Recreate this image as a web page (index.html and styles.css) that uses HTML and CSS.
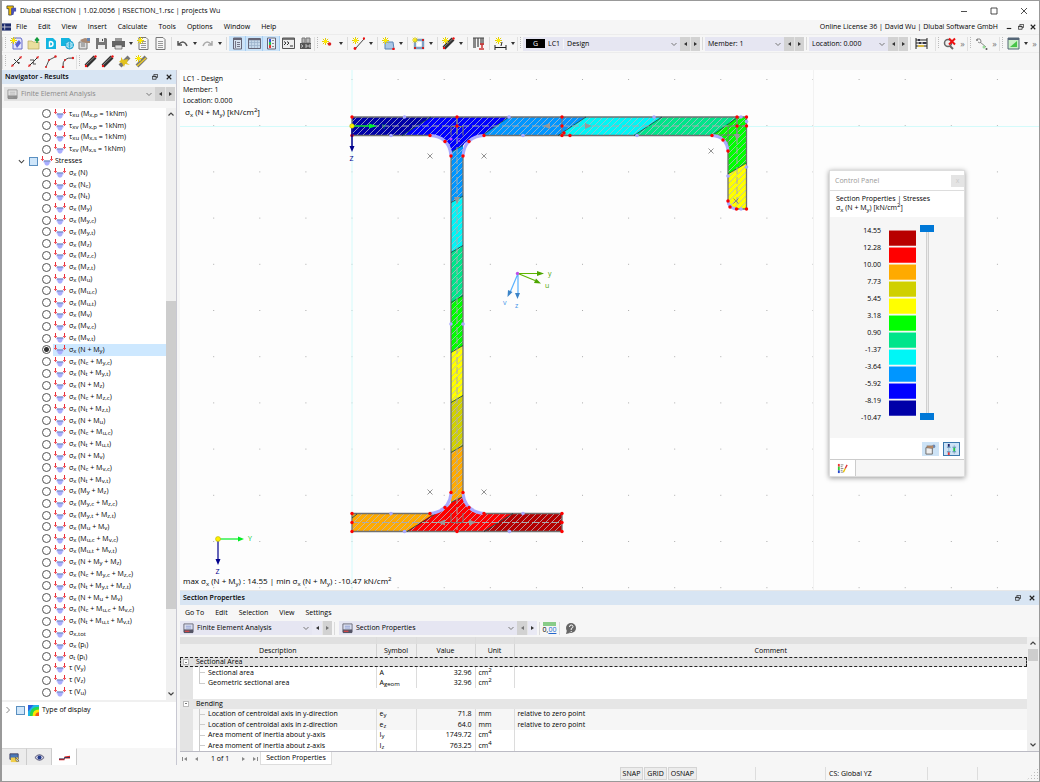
FILE: index.html
```html
<!DOCTYPE html>
<html lang="en">
<head>
<meta charset="utf-8">
<title>Dlubal RSECTION</title>
<link rel="stylesheet" href="styles.css">
</head>
<body>
<svg class="defs" aria-hidden="true">
<defs>
<symbol id="stress" viewBox="0 0 12 10"><path d="M2.500 4.500h7v2H8.500V8L7 9.500H5L3.500 8V6.500h-1z" fill="#a9adff"/><path d="M3 5h6" stroke="#6f8bb0"/><path d="M1.500 0v5M10.500 0v5" stroke="#e8303a"/><path d="M0 3h3v1H2v1H1V4H0zM9 3h3v1h-1v1h-1V4H9z" fill="#f0555c"/></symbol>
<symbol id="star" viewBox="0 0 8 8"><path d="M4 0v8M0 4h8M1 1l6 6M7 1L1 7" stroke="#e0c800" stroke-width="1.100"/><circle cx="4" cy="4" r="2" fill="#ffee00"/></symbol>
<symbol id="logo" viewBox="0 0 12 12"><path d="M1 1h7v3H6v7H3V4H1z" fill="#f3c000" stroke="#333" stroke-width=".8"/><path d="M6 3h5v4H9l-1 4H6z" fill="#4c53b5"/></symbol>
<symbol id="new" viewBox="0 0 13 13"><path d="M3 1h8l1 2v9H3z" fill="#e4e6fb" stroke="#666cc8"/><path d="M5 7l4-4 2 3-4 5z" fill="#5a62d6"/><use href="#star" width="7" height="7"/></symbol>
<symbol id="open" viewBox="0 0 13 13"><path d="M1 4h4l1 1h6v7H1z" fill="#eadf9e" stroke="#b7a85c" stroke-width=".7"/><path d="M10 6V2M8 3.500L10 1l2 2.500" stroke="#139b3c" stroke-width="1.400" fill="none"/></symbol>
<symbol id="cloud" viewBox="0 0 13 13"><path d="M2 1h7l3 3v8H2z" fill="#13b5e0"/><path d="M5.500 4.500v5q3.500 0 3.500-2.500T5.500 4.500" fill="none" stroke="#fff" stroke-width="1.400"/></symbol>
<symbol id="globe" viewBox="0 0 13 13"><path d="M0 1h8l2 2v6H0z" fill="#13b5e0"/><circle cx="8.500" cy="8" r="4" fill="#c8f1fb" stroke="#13a0d0"/><path d="M4.500 8h8M8.500 4v8M6 5.500q2.500 2 5 0M6 10.500q2.500-2 5 0" stroke="#13a0d0" stroke-width=".7" fill="none"/></symbol>
<symbol id="proj" viewBox="0 0 13 13"><path d="M1 5h8v7H1z" fill="#ddd" stroke="#777"/><path d="M3 7h4M3 9h4" stroke="#777"/><path d="M2 3l5-2 5 1v4L9 6 4 5z" fill="#a98a74"/><path d="M9 1h3v3H9z" fill="#6487b8"/></symbol>
<symbol id="save" viewBox="0 0 13 13"><path d="M1 1h10l1 1v10H1z" fill="#777"/><path d="M4 1h5v4H4zM3 8h7v4H3z" fill="#eee"/><path d="M7 2h1v2H7z" fill="#444"/></symbol>
<symbol id="print" viewBox="0 0 13 13"><path d="M3 1h7v3H3z" fill="#999"/><path d="M0 4h13v6H0z" fill="#666"/><path d="M3 8h7v4H3z" fill="#ddd" stroke="#555" stroke-width=".7"/></symbol>
<symbol id="doc" viewBox="0 0 13 13"><path d="M2 .5h7l2 2v10H2z" fill="#f7f7f7" stroke="#777"/><path d="M4 4.500h5M4 6.500h5M4 8.500h5M4 10.500h5" stroke="#999"/></symbol>
<symbol id="docnew" viewBox="0 0 13 13"><use href="#doc" width="13" height="13"/><use href="#star" width="7" height="7"/></symbol>
<symbol id="undo" viewBox="0 0 13 13"><path d="M2 4v4h4M2.500 7.500Q8 2 11 9" fill="none" stroke="#555" stroke-width="1.500"/></symbol>
<symbol id="redo" viewBox="0 0 13 13"><path d="M11 4v4H7M10.500 7.500Q5 2 2 9" fill="none" stroke="#aaa" stroke-width="1.500"/></symbol>
<symbol id="nav" viewBox="0 0 13 13"><path d="M2.500 1h8v11h-8z" fill="#d7e2ee" stroke="#667"/><path d="M2.500 1h8v2h-8z" fill="#667"/><path d="M6 5.500h3M6 7.500h3M6 9.500h3M4.500 4v7" stroke="#778"/></symbol>
<symbol id="grid" viewBox="0 0 13 13"><path d="M.5 1.500h12v10H.5z" fill="#c5d8ea" stroke="#667"/><path d="M1 2.500h11" stroke="#667" stroke-width="1.500"/><path d="M3.500 3v8M6.500 3v8M9.500 3v8M1 5.500h11M1 8.500h11" stroke="#9ab0c8" stroke-width=".7"/></symbol>
<symbol id="legend" viewBox="0 0 13 13"><path d="M2.500 1h8v11h-8z" fill="#e8eef5" stroke="#667"/><path d="M4 2h2v3H4z" fill="#3454e0"/><path d="M4 5h2v3H4z" fill="#24c84c"/><path d="M4 8h2v3H4z" fill="#e83535"/><path d="M7 3.500h2M7 6.500h2M7 9.500h2" stroke="#888"/></symbol>
<symbol id="console" viewBox="0 0 13 13"><path d="M.5 1h12v10.500H.5z" fill="#eee" stroke="#555"/><path d="M1 2h11" stroke="#555" stroke-width="1.500"/><path d="M2 4.500L4 6 2 8M5 4.500L7 6 5 8M8 9h3" fill="none" stroke="#333"/></symbol>
<symbol id="script" viewBox="0 0 13 13"><path d="M3 1h3v5H3zM7 1h4v5H7z" fill="#bbb" stroke="#777"/><path d="M1 6h11v6H1z" fill="#555"/><path d="M2 7.500l2 1.500-2 1.500M6 8h2v2H6M12 8h-2v2h2" fill="none" stroke="#ddd" stroke-width=".8"/></symbol>
<symbol id="node" viewBox="0 0 13 13"><use href="#star" y="1" width="7" height="7"/><circle cx="7.500" cy="7" r="1.800" fill="#d22"/></symbol>
<symbol id="line" viewBox="0 0 13 13"><path d="M3 12l9-10" stroke="#444"/><circle cx="3" cy="11.500" r="1.400" fill="#e11"/><circle cx="12" cy="1.500" r="1.200" fill="#e11"/><use href="#star" width="7" height="7"/></symbol>
<symbol id="area" viewBox="0 0 13 13"><path d="M3 5h8l1 7H3z" fill="#a9c6e6" stroke="#5b84b4"/><circle cx="11.500" cy="12" r="1.300" fill="#e11"/><use href="#star" width="7" height="7"/></symbol>
<symbol id="opening" viewBox="0 0 13 13"><path d="M3 3h8v8H3z" fill="#fff" stroke="#7fa0c4" stroke-width="2.400"/><path d="M2 2h2v2H2zM10 2h2v2h-2zM2 10h2v2H2zM10 10h2v2h-2z" fill="#c22"/><use href="#star" width="6" height="6"/></symbol>
<symbol id="member" viewBox="0 0 13 13"><path d="M2 11L11 2" stroke="#333" stroke-width="4"/><path d="M2 10L11 1.500" stroke="#888"/><circle cx="2" cy="11" r="1.200" fill="#e11"/><circle cx="11.500" cy="1.500" r="1.200" fill="#e11"/></symbol>
<symbol id="membernew" viewBox="0 0 13 13"><use href="#member" width="13" height="13"/><use href="#star" width="7" height="7"/></symbol>
<symbol id="support" viewBox="0 0 13 13"><path d="M1 1h3v10H1zM5 1h2v9H5zM8 1h4v7H8z" fill="#888"/><path d="M1 1h11" stroke="#444"/><path d="M8 7h4M10 7v4M7 12h5" stroke="#c33" stroke-width="1.500"/></symbol>
<symbol id="dim" viewBox="0 0 13 13"><path d="M1 8v5M12 8v5M1 10.500h11M7 9l1-4" stroke="#222" fill="none"/><use href="#star" x="1" width="7" height="7"/></symbol>
<symbol id="abacus" viewBox="0 0 13 13"><path d="M1 1v11M12 1v11M1 3h11M1 6h11M1 9h11" stroke="#222"/><path d="M3 2h2v2H3zM8 5h3v2H8zM4 5h2v2H4z" fill="#334"/><path d="M3 8h6v2H3z" fill="#d5b640"/></symbol>
<symbol id="unselect" viewBox="0 0 13 13"><circle cx="5" cy="6" r="3.500" fill="#eee" stroke="#666" stroke-width="1.500"/><path d="M7 9l3 3" stroke="#666" stroke-width="2"/><path d="M6 1.500l6 6M12 1.500l-6 6" stroke="#e11" stroke-width="2"/></symbol>
<symbol id="parts" viewBox="0 0 13 13"><path d="M2 2q4-1 4 2t-3 1M5 5l6 5" stroke="#888" fill="none"/><circle cx="2" cy="3" r="1" fill="#777"/><circle cx="9" cy="10" r="1.500" fill="#9d9"/><circle cx="11.500" cy="12" r="1" fill="#555"/></symbol>
<symbol id="chart" viewBox="0 0 13 13"><path d="M1 1h11v11H1z" fill="#c9f0c5" stroke="#567"/><path d="M1 2h11" stroke="#567" stroke-width="2"/><path d="M3 10l7-6v6z" fill="#48c448"/></symbol>
<symbol id="seg" viewBox="0 0 13 13"><path d="M2 11L11 2" stroke="#333"/><path d="M1 12l3-1-2-2zM12 1L9 2l2 2z" fill="#d22"/></symbol>
<symbol id="seg1" viewBox="0 0 13 13"><use href="#seg" width="13" height="13"/><path d="M4 4l5 5M7 7l3 1" stroke="#444"/></symbol>
<symbol id="seg2" viewBox="0 0 13 13"><use href="#seg" width="13" height="13"/><path d="M3 5h4l-1 4h3" stroke="#555" fill="none"/></symbol>
<symbol id="seg3" viewBox="0 0 13 13"><path d="M2 12l3-7 6-3" stroke="#555" fill="none"/><circle cx="2" cy="12" r="1" fill="#d22"/><circle cx="5" cy="5" r="1" fill="#d22"/><circle cx="11.500" cy="1.500" r="1.200" fill="#d22"/></symbol>
<symbol id="seg4" viewBox="0 0 13 13"><path d="M2 12Q1 2 12 3" stroke="#444" fill="none"/><circle cx="2" cy="12" r="1.200" fill="#d22"/><circle cx="4" cy="5" r="1" fill="#d22"/><circle cx="12" cy="3" r="1.200" fill="#d22"/></symbol>
<symbol id="goldm" viewBox="0 0 13 13"><path d="M2 11L11 2" stroke="#777" stroke-width="4"/><path d="M3 2l2 3 5-1-1 4 3 2-5-1-1 3-2-4-3-1 2-2z" fill="#e3c21e"/></symbol>
<symbol id="goldm2" viewBox="0 0 13 13"><path d="M2 11L11 2" stroke="#777" stroke-width="4"/><path d="M2 11l9-8" stroke="#e8c92a" stroke-width="1.500"/><use href="#star" width="7" height="7"/></symbol>
<symbol id="fea" viewBox="0 0 12 12"><path d="M1 1h10v9H1z" fill="#dfe3f3" stroke="#667"/><path d="M1 7h10v4H1z" fill="#556"/><path d="M2 9h5" stroke="#e44" stroke-width="1.200"/><path d="M3 3.500h6M3 5.500h6" stroke="#8a9ad0"/></symbol>
<symbol id="restore" viewBox="0 0 8 8"><path d="M2.500 2.500v-2h5v4h-2M.5 3h5v4h-5zM.5 3.500h5" fill="none" stroke="#222"/></symbol>
<symbol id="close" viewBox="0 0 8 8"><path d="M1 1l6 6M7 1L1 7" stroke="#222" stroke-width="1.500"/></symbol>
<symbol id="min" viewBox="0 0 8 8"><path d="M1 6h6" stroke="#222" stroke-width="1.500"/></symbol>
<symbol id="x" viewBox="-4 -4 8 8"><path d="M-2.500-2.500l5 5M2.500-2.500l-5 5" stroke="#777" stroke-width=".8"/></symbol>
<pattern id="hatch" width="6" height="6" patternUnits="userSpaceOnUse"><path d="M-1 7L7-1M-1 1L1-1M5 7L7 5" stroke="#b4b8c4" stroke-width=".8"/></pattern>
<pattern id="dots" x="351.500" y="79" width="46.100" height="46.200" patternUnits="userSpaceOnUse"><path d="M0 0h1v1H0z" fill="#aaa"/></pattern>
</defs>
</svg>

<div class="window">
<header class="titlebar">
<svg class="i12"><use href="#logo"/></svg><h1>Dlubal RSECTION | 1.02.0056 | RSECTION_1.rsc | projects Wu</h1>
<div class="wincontrols">
<button aria-label="Minimize"><svg viewBox="0 0 8 8"><path d="M1 4.500h6" stroke="#222" stroke-width=".8"/></svg></button>
<button aria-label="Maximize"><svg viewBox="0 0 8 8"><path d="M1 1h6v6H1z" fill="none" stroke="#222" stroke-width=".8"/></svg></button>
<button aria-label="Close"><svg viewBox="0 0 8 8"><path d="M1 1l6 6M7 1L1 7" stroke="#222" stroke-width=".8"/></svg></button>
</div>
</header>

<nav class="menubar">
<svg class="flag" viewBox="0 0 10 8"><path d="M0 0h10v8H0z" fill="#1b2a6b"/><path d="M0 4h10M3 1v6" stroke="#ccd"/></svg>
<button>File</button><button>Edit</button><button>View</button><button>Insert</button><button>Calculate</button><button>Tools</button><button>Options</button><button>Window</button><button>Help</button>
<span class="license">Online License 36 | David Wu | Dlubal Software GmbH</span>
<button class="mdi" aria-label="Minimize document"><svg><use href="#min"/></svg></button><button class="mdi" aria-label="Restore document"><svg><use href="#restore"/></svg></button><button class="mdi" aria-label="Close document"><svg><use href="#close"/></svg></button>
</nav>

<div class="toolbar main">
<i class="grip"></i>
<button class="ib" aria-label="New"><svg><use href="#new"/></svg></button><button class="ib" aria-label="Open"><svg><use href="#open"/></svg></button><button class="ib" aria-label="Cloud"><svg><use href="#cloud"/></svg></button><button class="ib" aria-label="Web"><svg><use href="#globe"/></svg></button><button class="ib" aria-label="Project"><svg><use href="#proj"/></svg></button><button class="ib" aria-label="Save"><svg><use href="#save"/></svg></button><button class="ib" aria-label="Print"><svg><use href="#print"/></svg></button><button class="dd" aria-label="Print options"></button><button class="ib" aria-label="New report"><svg><use href="#docnew"/></svg></button><button class="ib" aria-label="Report"><svg><use href="#doc"/></svg></button>
<i class="sep"></i>
<button class="ib" aria-label="Undo"><svg><use href="#undo"/></svg></button><button class="dd" aria-label="Undo list"></button><button class="ib" aria-label="Redo"><svg><use href="#redo"/></svg></button><button class="dd" aria-label="Redo list"></button>
<i class="sep"></i>
<button class="ib on" aria-label="Navigator"><svg><use href="#nav"/></svg></button><button class="ib on" aria-label="Tables"><svg><use href="#grid"/></svg></button><button class="ib on" aria-label="Control panel"><svg><use href="#legend"/></svg></button><button class="ib" aria-label="Console"><svg><use href="#console"/></svg></button><button class="ib" aria-label="Script"><svg><use href="#script"/></svg></button>
<i class="grip"></i>
<button class="ib" aria-label="Point"><svg><use href="#node"/></svg></button><button class="dd" aria-label="Point types"></button><i class="sep"></i>
<button class="ib" aria-label="Line"><svg><use href="#line"/></svg></button><button class="dd" aria-label="Line types"></button><i class="sep"></i>
<button class="ib" aria-label="Part"><svg><use href="#area"/></svg></button><button class="dd" aria-label="Part types"></button><i class="sep"></i>
<button class="ib" aria-label="Opening"><svg><use href="#opening"/></svg></button><button class="dd" aria-label="Opening types"></button><i class="sep"></i>
<button class="ib" aria-label="Element"><svg><use href="#membernew"/></svg></button><button class="dd" aria-label="Element types"></button><i class="sep"></i>
<button class="ib" aria-label="Sections"><svg><use href="#support"/></svg></button><i class="sep"></i>
<button class="ib" aria-label="Dimension"><svg><use href="#dim"/></svg></button><button class="dd" aria-label="Dimension types"></button>
<i class="grip"></i>
<div class="combo lc"><b>G</b><span>LC1</span><select aria-label="Load case"><option>Design</option></select></div><button class="step prev" aria-label="Previous load case"></button><button class="step next" aria-label="Next load case"></button><i class="sep"></i>
<div class="combo mem"><select aria-label="Member"><option>Member: 1</option></select></div><button class="step prev" aria-label="Previous member"></button><button class="step next" aria-label="Next member"></button><i class="sep"></i>
<div class="combo mem"><select aria-label="Location"><option>Location: 0.000</option></select></div><button class="step prev" aria-label="Previous location"></button><button class="step next" aria-label="Next location"></button><i class="sep"></i>
<button class="ib" aria-label="Values"><svg><use href="#abacus"/></svg></button>
<i class="grip pushed"></i><button class="ib" aria-label="Clear selection"><svg><use href="#unselect"/></svg></button><button class="more" aria-label="More selection">»</button>
<i class="grip"></i><button class="ib" aria-label="Parts"><svg><use href="#parts"/></svg></button><button class="more" aria-label="More parts">»</button>
<i class="grip"></i><button class="ib" aria-label="Diagram"><svg><use href="#chart"/></svg></button><button class="dd" aria-label="Diagram options"></button><button class="more" aria-label="More diagrams">»</button>
</div>

<div class="toolbar">
<i class="grip"></i>
<button class="ib" aria-label="Line with nodes"><svg><use href="#seg1"/></svg></button><button class="ib" aria-label="Polyline"><svg><use href="#seg2"/></svg></button><button class="ib" aria-label="Angled line"><svg><use href="#seg3"/></svg></button><button class="ib" aria-label="Arc"><svg><use href="#seg4"/></svg></button>
<i class="grip"></i>
<button class="ib" aria-label="Element A"><svg><use href="#member"/></svg></button><button class="ib" aria-label="Element B"><svg><use href="#member"/></svg></button><button class="ib" aria-label="Point element"><svg><use href="#goldm"/></svg></button><button class="ib" aria-label="New point element"><svg><use href="#goldm2"/></svg></button>
</div>

<div class="body">
<aside class="navigator">
<div class="panelhead"><h2>Navigator - Results</h2><button aria-label="Float navigator"><svg><use href="#restore"/></svg></button><button aria-label="Close navigator"><svg><use href="#close"/></svg></button></div>
<div class="navcombo"><div class="combo off"><svg class="i12 gray"><use href="#fea"/></svg><select aria-label="Analysis" disabled><option>Finite Element Analysis</option></select></div><button class="step prev" aria-label="Previous analysis"></button><button class="step next" aria-label="Next analysis"></button></div>
<div class="treewrap">
<div class="tree">
<label><input type="radio" name="r"><svg><use href="#stress"/></svg><span>τ<sub>xu</sub> (M<sub>x,p</sub> = 1kNm)</span></label>
<label><input type="radio" name="r"><svg><use href="#stress"/></svg><span>τ<sub>xv</sub> (M<sub>x,p</sub> = 1kNm)</span></label>
<label><input type="radio" name="r"><svg><use href="#stress"/></svg><span>τ<sub>xu</sub> (M<sub>x,s</sub> = 1kNm)</span></label>
<label><input type="radio" name="r"><svg><use href="#stress"/></svg><span>τ<sub>xv</sub> (M<sub>x,s</sub> = 1kNm)</span></label>
<label class="branch"><svg class="chev" viewBox="0 0 8 8"><path d="M1 2.500l3 3 3-3" fill="none" stroke="#444" stroke-width="1.200"/></svg><input type="checkbox"><svg><use href="#stress"/></svg><span>Stresses</span></label>
<label><input type="radio" name="r"><svg><use href="#stress"/></svg><span>σ<sub>x</sub> (N)</span></label>
<label><input type="radio" name="r"><svg><use href="#stress"/></svg><span>σ<sub>x</sub> (N<sub>c</sub>)</span></label>
<label><input type="radio" name="r"><svg><use href="#stress"/></svg><span>σ<sub>x</sub> (N<sub>t</sub>)</span></label>
<label><input type="radio" name="r"><svg><use href="#stress"/></svg><span>σ<sub>x</sub> (M<sub>y</sub>)</span></label>
<label><input type="radio" name="r"><svg><use href="#stress"/></svg><span>σ<sub>x</sub> (M<sub>y,c</sub>)</span></label>
<label><input type="radio" name="r"><svg><use href="#stress"/></svg><span>σ<sub>x</sub> (M<sub>y,t</sub>)</span></label>
<label><input type="radio" name="r"><svg><use href="#stress"/></svg><span>σ<sub>x</sub> (M<sub>z</sub>)</span></label>
<label><input type="radio" name="r"><svg><use href="#stress"/></svg><span>σ<sub>x</sub> (M<sub>z,c</sub>)</span></label>
<label><input type="radio" name="r"><svg><use href="#stress"/></svg><span>σ<sub>x</sub> (M<sub>z,t</sub>)</span></label>
<label><input type="radio" name="r"><svg><use href="#stress"/></svg><span>σ<sub>x</sub> (M<sub>u</sub>)</span></label>
<label><input type="radio" name="r"><svg><use href="#stress"/></svg><span>σ<sub>x</sub> (M<sub>u,c</sub>)</span></label>
<label><input type="radio" name="r"><svg><use href="#stress"/></svg><span>σ<sub>x</sub> (M<sub>u,t</sub>)</span></label>
<label><input type="radio" name="r"><svg><use href="#stress"/></svg><span>σ<sub>x</sub> (M<sub>v</sub>)</span></label>
<label><input type="radio" name="r"><svg><use href="#stress"/></svg><span>σ<sub>x</sub> (M<sub>v,c</sub>)</span></label>
<label><input type="radio" name="r"><svg><use href="#stress"/></svg><span>σ<sub>x</sub> (M<sub>v,t</sub>)</span></label>
<label class="sel"><input type="radio" name="r" checked><svg><use href="#stress"/></svg><span>σ<sub>x</sub> (N + M<sub>y</sub>)</span></label>
<label><input type="radio" name="r"><svg><use href="#stress"/></svg><span>σ<sub>x</sub> (N<sub>c</sub> + M<sub>y,c</sub>)</span></label>
<label><input type="radio" name="r"><svg><use href="#stress"/></svg><span>σ<sub>x</sub> (N<sub>t</sub> + M<sub>y,t</sub>)</span></label>
<label><input type="radio" name="r"><svg><use href="#stress"/></svg><span>σ<sub>x</sub> (N + M<sub>z</sub>)</span></label>
<label><input type="radio" name="r"><svg><use href="#stress"/></svg><span>σ<sub>x</sub> (N<sub>c</sub> + M<sub>z,c</sub>)</span></label>
<label><input type="radio" name="r"><svg><use href="#stress"/></svg><span>σ<sub>x</sub> (N<sub>t</sub> + M<sub>z,t</sub>)</span></label>
<label><input type="radio" name="r"><svg><use href="#stress"/></svg><span>σ<sub>x</sub> (N + M<sub>u</sub>)</span></label>
<label><input type="radio" name="r"><svg><use href="#stress"/></svg><span>σ<sub>x</sub> (N<sub>c</sub> + M<sub>u,c</sub>)</span></label>
<label><input type="radio" name="r"><svg><use href="#stress"/></svg><span>σ<sub>x</sub> (N<sub>t</sub> + M<sub>u,t</sub>)</span></label>
<label><input type="radio" name="r"><svg><use href="#stress"/></svg><span>σ<sub>x</sub> (N + M<sub>v</sub>)</span></label>
<label><input type="radio" name="r"><svg><use href="#stress"/></svg><span>σ<sub>x</sub> (N<sub>c</sub> + M<sub>v,c</sub>)</span></label>
<label><input type="radio" name="r"><svg><use href="#stress"/></svg><span>σ<sub>x</sub> (N<sub>t</sub> + M<sub>v,t</sub>)</span></label>
<label><input type="radio" name="r"><svg><use href="#stress"/></svg><span>σ<sub>x</sub> (M<sub>y</sub> + M<sub>z</sub>)</span></label>
<label><input type="radio" name="r"><svg><use href="#stress"/></svg><span>σ<sub>x</sub> (M<sub>y,c</sub> + M<sub>z,c</sub>)</span></label>
<label><input type="radio" name="r"><svg><use href="#stress"/></svg><span>σ<sub>x</sub> (M<sub>y,t</sub> + M<sub>z,t</sub>)</span></label>
<label><input type="radio" name="r"><svg><use href="#stress"/></svg><span>σ<sub>x</sub> (M<sub>u</sub> + M<sub>v</sub>)</span></label>
<label><input type="radio" name="r"><svg><use href="#stress"/></svg><span>σ<sub>x</sub> (M<sub>u,c</sub> + M<sub>v,c</sub>)</span></label>
<label><input type="radio" name="r"><svg><use href="#stress"/></svg><span>σ<sub>x</sub> (M<sub>u,t</sub> + M<sub>v,t</sub>)</span></label>
<label><input type="radio" name="r"><svg><use href="#stress"/></svg><span>σ<sub>x</sub> (N + M<sub>y</sub> + M<sub>z</sub>)</span></label>
<label><input type="radio" name="r"><svg><use href="#stress"/></svg><span>σ<sub>x</sub> (N<sub>c</sub> + M<sub>y,c</sub> + M<sub>z,c</sub>)</span></label>
<label><input type="radio" name="r"><svg><use href="#stress"/></svg><span>σ<sub>x</sub> (N<sub>t</sub> + M<sub>y,t</sub> + M<sub>z,t</sub>)</span></label>
<label><input type="radio" name="r"><svg><use href="#stress"/></svg><span>σ<sub>x</sub> (N + M<sub>u</sub> + M<sub>v</sub>)</span></label>
<label><input type="radio" name="r"><svg><use href="#stress"/></svg><span>σ<sub>x</sub> (N<sub>c</sub> + M<sub>u,c</sub> + M<sub>v,c</sub>)</span></label>
<label><input type="radio" name="r"><svg><use href="#stress"/></svg><span>σ<sub>x</sub> (N<sub>t</sub> + M<sub>u,t</sub> + M<sub>v,t</sub>)</span></label>
<label><input type="radio" name="r"><svg><use href="#stress"/></svg><span>σ<sub>x,tot</sub></span></label>
<label><input type="radio" name="r"><svg><use href="#stress"/></svg><span>σ<sub>x</sub> (p<sub>i</sub>)</span></label>
<label><input type="radio" name="r"><svg><use href="#stress"/></svg><span>σ<sub>t</sub> (p<sub>i</sub>)</span></label>
<label><input type="radio" name="r"><svg><use href="#stress"/></svg><span>τ (V<sub>y</sub>)</span></label>
<label><input type="radio" name="r"><svg><use href="#stress"/></svg><span>τ (V<sub>z</sub>)</span></label>
<label><input type="radio" name="r"><svg><use href="#stress"/></svg><span>τ (V<sub>u</sub>)</span></label>
</div>
<div class="scroll"><svg viewBox="0 0 10 10"><path d="M2.500 6.500L5 4l2.500 2.500" fill="none" stroke="#444" stroke-width="1.200"/></svg><i class="thumb"></i><svg viewBox="0 0 10 10"><path d="M2.500 3.500L5 6l2.500-2.500" fill="none" stroke="#444" stroke-width="1.200"/></svg></div>
</div>
<div class="display"><label><svg class="chev" viewBox="0 0 8 8"><path d="M2.500 1l3 3-3 3" fill="none" stroke="#888"/></svg><input type="checkbox"><svg class="i12" viewBox="0 0 12 12"><path d="M0 0h12v12H0z" fill="#1db7e8"/><path d="M2 12Q2 2 12 2v10z" fill="#2ad84a"/><path d="M5 12q0-7 7-7v7z" fill="#ffe500"/><path d="M8 12q0-4 4-4v4z" fill="#f4551b"/><path d="M0 0h6L0 7z" fill="#2864e0"/></svg><span>Type of display</span></label></div>
<div class="navtabs">
<button aria-label="Data"><svg viewBox="0 0 12 12"><path d="M1 2h9v6H1z" fill="#4b79b8" stroke="#446"/><path d="M2 6h8v5H2z" fill="#f1cf4a"/><path d="M7 6l4 4H8z" fill="#fff" stroke="#222" stroke-width=".6"/></svg></button><button aria-label="Display"><svg viewBox="0 0 12 12"><path d="M1 6q5-6 10 0-5 6-10 0z" fill="#dde" stroke="#446"/><circle cx="6" cy="6" r="2.200" fill="#223a8a"/></svg></button><button class="active" aria-label="Results"><svg viewBox="0 0 12 12"><path d="M0 7.500h6V9H0z" fill="#d22"/><path d="M6 5l6-1v3H6z" fill="#d22"/><path d="M0 7.500h6V6h6" stroke="#335" fill="none"/></svg></button>
</div>
</aside>

<main class="work">
<section class="canvas">
<svg class="drawing" role="img" aria-label="Section with stress distribution">
<g transform="translate(-180 -70)">
<rect x="180" y="70" width="3000" height="2000" fill="url(#dots)"/>
<path d="M180 126.500h3000M352 70v2000" stroke="#d4fbfb"/>
<path d="M813.500 70v2000" stroke="#f2f2f2"/>
<path d="M352 117h79l-29 18.500h-50z" fill="#0000a8"/>
<path d="M431 117h78l-27 18.500q-16 4-19 10L451 152q0-12-20-16.500h-29z" fill="#0000ff"/>
<path d="M509 117h77l-28 18.500h-76z" fill="#0096ff"/>
<path d="M586 117h76l-28 18.500h-76z" fill="#00f6f6"/>
<path d="M662 117h76l-26 18.500h-78z" fill="#00e58a"/>
<path d="M738 117h8.500v46L728 174v-23q0-15-16-15.500z" fill="#00ff00"/>
<path d="M746.500 163v46H736q-8 0-8-8v-27z" fill="#ff0"/>
<path d="M451 152l12-6.500V196l-12 6.500z" fill="#0096ff"/>
<path d="M451 202.500l12-6.500v49.500l-12 7z" fill="#00f6f6"/>
<path d="M451 252.500l12-7v50l-12 7z" fill="#00e58a"/>
<path d="M451 302.500l12-7v50l-12 7z" fill="#00ff00"/>
<path d="M451 352.500l12-7v50l-12 7z" fill="#ff0"/>
<path d="M451 402.500l12-7v50l-12 7z" fill="#d0d000"/>
<path d="M451 452.500l12-7v51l-12 6z" fill="#ffaa00"/>
<path d="M352 513.500h84l-29 18h-55z" fill="#ffaa00"/>
<path d="M434 513.500q14-4 17-11l12-6q3 15 21 17h29l-29 18h-77z" fill="#f00"/>
<path d="M513 513.500h49v18h-78z" fill="#b40000"/>
<path d="M352 117h394.500v92H736q-8 0-8-8v-50q0-15-16-15.500H484q-19 0-21 20V493q2 19 21 20.500h78v18H352v-18h78q19-1 21-20.500V155.500q-1-19-21-20h-78z" fill="url(#hatch)" stroke="#707070" stroke-width="1.300"/>
<path d="M431 117l-29 18.500M509 117l-27 18.500M586 117l-28 18.500M662 117l-28 18.500M738 117l-26 18.500M728 174l18.500-11M451 152l12-6.500M451 202.500l12-6.500M451 252.500l12-7M451 302.500l12-7M451 352.500l12-7M451 402.500l12-7M451 452.500l12-7M451 502.500l12-6M436 513.500l-29 18M513 513.500l-29 18M352 518l5-4" stroke="#063c3c" stroke-width=".8"/>
<path d="M352 126h394M352 522.500h210M457 117v414M737 117v90" stroke="#aaa" stroke-dasharray="7 3" fill="none"/>
<path d="M451 135.500v-9h12v9M451 513v9.500h12V513M457 117v18M562 117v18M728 126v25M712 135h25M737 117v18M728 126h18" fill="none" stroke="#777"/>
<path d="M430 135.500q19 1 21 20M484 135.500q-19 1-21 20M430 513.500q19-2 21-20M484 513.500q-19-2-21-20M712 135.500q15 1 16 16M728 200q0 8 8 9" fill="none" stroke="#aaaaff" stroke-width="3"/>
<path d="M543 126l7-3v6zM592 126l-7-3v6zM438 522.500l7-3v6zM476 522.500l-7-3v6zM457 204l-3-7h6zM737 141l-3-7h6z" fill="#999"/>
<g fill="#a9a9ff"><circle cx="404.500" cy="117" r="1.800"/><circle cx="391" cy="135.500" r="1.800"/><circle cx="509" cy="117" r="1.800"/><circle cx="523" cy="135.500" r="1.800"/><circle cx="654" cy="117" r="1.800"/><circle cx="637" cy="135.500" r="1.800"/><circle cx="741" cy="117" r="1.800"/><circle cx="746.500" cy="121.500" r="1.800"/><circle cx="746.500" cy="167" r="1.800"/><circle cx="728" cy="176" r="1.800"/><circle cx="741" cy="209" r="1.800"/><circle cx="451" cy="324" r="1.800"/><circle cx="463" cy="324" r="1.800"/><circle cx="391" cy="513.500" r="1.800"/><circle cx="523" cy="513.500" r="1.800"/><circle cx="404.500" cy="531.500" r="1.800"/><circle cx="509.500" cy="531.500" r="1.800"/></g>
<g fill="#f00"><circle cx="352" cy="117" r="1.700"/><circle cx="352" cy="135.500" r="1.700"/><circle cx="457" cy="117" r="1.700"/><circle cx="457" cy="126" r="1.700"/><circle cx="430" cy="135.500" r="1.700"/><circle cx="445" cy="141.500" r="1.700"/><circle cx="451" cy="156" r="1.700"/><circle cx="484" cy="135.500" r="1.700"/><circle cx="469" cy="141.500" r="1.700"/><circle cx="463" cy="156" r="1.700"/><circle cx="562" cy="117" r="1.700"/><circle cx="562" cy="126" r="1.700"/><circle cx="564" cy="133" r="1.700"/><circle cx="562" cy="135.500" r="1.700"/><circle cx="570" cy="135.500" r="1.700"/><circle cx="737" cy="117" r="1.700"/><circle cx="746.500" cy="117" r="1.700"/><circle cx="737" cy="126" r="1.700"/><circle cx="746.500" cy="126" r="1.700"/><circle cx="712" cy="135.500" r="1.700"/><circle cx="723" cy="140" r="1.700"/><circle cx="728" cy="151" r="1.700"/><circle cx="728" cy="201" r="1.700"/><circle cx="730" cy="207" r="1.700"/><circle cx="736.500" cy="209" r="1.700"/><circle cx="746.500" cy="209" r="1.700"/><circle cx="451" cy="492.500" r="1.700"/><circle cx="463" cy="492.500" r="1.700"/><circle cx="445" cy="507.500" r="1.700"/><circle cx="469" cy="507.500" r="1.700"/><circle cx="430" cy="513.500" r="1.700"/><circle cx="484" cy="513.500" r="1.700"/><circle cx="352" cy="513.500" r="1.700"/><circle cx="352" cy="522.500" r="1.700"/><circle cx="352" cy="531.500" r="1.700"/><circle cx="457" cy="531.500" r="1.700"/><circle cx="562" cy="513.500" r="1.700"/><circle cx="562" cy="522.500" r="1.700"/><circle cx="562" cy="531.500" r="1.700"/></g>
<g><use href="#x" x="426" y="152" width="8" height="8"/><use href="#x" x="480" y="152" width="8" height="8"/><use href="#x" x="707" y="147" width="8" height="8"/><use href="#x" x="426" y="488" width="8" height="8"/><use href="#x" x="480" y="488" width="8" height="8"/><use href="#x" x="732" y="197" width="8" height="8"/></g>
<circle cx="451" cy="139" r="1.500" fill="#c050ff"/>
<path d="M352 126h19" stroke="#0c3" stroke-width="1.500"/><path d="M377 126l-8-2.500v5z" fill="#0e3"/>
<path d="M352 126v20" stroke="#00008c" stroke-width="1.500"/><path d="M352 152l-2.500-6h5z" fill="#00008c"/>
<circle cx="352" cy="126" r="2.300" fill="#fe0" stroke="#aa0" stroke-width=".5"/>
<path d="M218 539h20" stroke="#0e2" stroke-width="1.200"/><path d="M244 539l-6-2.500v5z" fill="#0e2"/>
<path d="M218 539v20" stroke="#00008c" stroke-width="1.200"/><path d="M218 565l-2.500-6h5z" fill="#00008c"/>
<circle cx="218" cy="539" r="2.500" fill="#fe0" stroke="#aa0" stroke-width=".5"/>
<path d="M518 273.500h20M518 273.500l17 7" stroke="#5db500" stroke-width="1.200"/><path d="M544 273.500l-7-2.500v5zM541 283.500l-7-.5 2-4.500z" fill="#4da600"/>
<path d="M518 273.500v20M518 273.500l-8 19" stroke="#59b2ff" stroke-width="1.200"/><path d="M517.500 299l-2.500-6h5zM507.500 297l.5-7 4.500 2z" fill="#3c84c8"/>
<circle cx="517.500" cy="273.500" r="1.700" fill="#c050e8"/>
<g class="axis"><text x="382" y="129" fill="#0a5">Y</text><text x="349.500" y="161" fill="#00008c">Z</text><text x="248" y="541" fill="#0c2">Y</text><text x="215.500" y="574" fill="#00008c">Z</text><text x="548" y="276" fill="#4da600">y</text><text x="545" y="288" fill="#4da600">u</text><text x="503" y="305" fill="#3f95ea">v</text><text x="515" y="308" fill="#3f95ea">z</text><text x="457" y="142" fill="#b060ff">c</text></g>
</g>
</svg>
<div class="info"><p>LC1 - Design</p><p>Member: 1</p><p>Location: 0.000</p><p class="sig">σ<sub>x</sub> (N + M<sub>y</sub>) [kN/cm<sup>2</sup>]</p></div>
<p class="extremes">max σ<sub>x</sub> (N + M<sub>y</sub>) : 14.55 | min σ<sub>x</sub> (N + M<sub>y</sub>) : -10.47 kN/cm<sup>2</sup></p>

<aside class="control">
<div class="ctitle"><h2>Control Panel</h2><button aria-label="Close control panel">x</button></div>
<div class="chead"><p>Section Properties | Stresses</p><p>σ<sub>x</sub> (N + M<sub>y</sub>) [kN/cm<sup>2</sup>]</p></div>
<div class="scale">
<ol class="vals"><li>14.55</li><li>12.28</li><li>10.00</li><li>7.73</li><li>5.45</li><li>3.18</li><li>0.90</li><li>-1.37</li><li>-3.64</li><li>-5.92</li><li>-8.19</li><li>-10.47</li></ol>
<div class="cols"><i class="c1"></i><i class="c2"></i><i class="c3"></i><i class="c4"></i><i class="c5"></i><i class="c6"></i><i class="c7"></i><i class="c8"></i><i class="c9"></i><i class="c10"></i><i class="c11"></i></div>
<div class="slider"><input type="range" min="0" max="11" value="11" aria-label="Upper limit"><input type="range" min="0" max="11" value="0" aria-label="Lower limit"></div>
</div>
<div class="cbtns"><button aria-label="Options"><svg viewBox="0 0 12 12"><path d="M1 4h7v7H1z" fill="#eee" stroke="#666"/><path d="M2 4V2h5l3-1 1 2-3 2z" fill="#b98964" stroke="#777" stroke-width=".5"/><path d="M9 1h2v3H9z" fill="#6487b8"/></svg></button><button class="on" aria-label="Scale display"><svg viewBox="0 0 12 12"><path d="M3 0v12M9 1v10" stroke="#9ab" stroke-width=".8"/><path d="M2 0h2v3H2z" fill="#226"/><path d="M2 9h2v3H2z" fill="#e33"/><path d="M8 4h2v4H8z" fill="#2c4"/><path d="M1 3.500h4M7 3.500h4M1 8.500h4M7 8.500h4" stroke="#37a" stroke-width=".8"/></svg></button></div>
<div class="ctabs"><button aria-label="Color scale"><svg viewBox="0 0 12 12"><path d="M1 1h2v3H1z" fill="#e33"/><path d="M1 4h2v4H1z" fill="#3c3"/><path d="M1 8h2v3H1z" fill="#24c"/><path d="M4 2h3M4 4h2M4 6h3M4 8h2M4 10h3" stroke="#555" stroke-width=".7"/><path d="M7 10l2-4" stroke="#e8c000" stroke-width="1.500"/><path d="M9 6l2-4" stroke="#d33" stroke-width="1.500"/></svg></button></div>
</aside>
</section>

<section class="props">
<div class="panelhead"><h2>Section Properties</h2><button aria-label="Float table"><svg><use href="#restore"/></svg></button><button aria-label="Close table"><svg><use href="#close"/></svg></button></div>
<div class="pmenu"><button>Go To</button><button>Edit</button><button>Selection</button><button>View</button><button>Settings</button></div>
<div class="ptools">
<div class="combo p1"><svg class="i12"><use href="#fea"/></svg><select aria-label="Analysis type"><option>Finite Element Analysis</option></select></div><button class="step prev lit" aria-label="Previous type"></button><button class="step next" aria-label="Next type"></button><i class="sep wide"></i>
<div class="combo p2"><svg class="i12"><use href="#fea"/></svg><select aria-label="Table"><option>Section Properties</option></select></div><button class="step prev" aria-label="Previous table"></button><button class="step next lit" aria-label="Next table"></button><i class="sep"></i>
<button class="ib units" aria-label="Decimal places"><span>0,<u>00</u></span></button><i class="sep"></i><button class="ib" aria-label="Help"><svg viewBox="0 0 13 13"><circle cx="7" cy="6" r="5" fill="#666"/><path d="M3 8l-1 4 4-1" fill="#666"/><path d="M5.500 5q0-2 1.700-2T9 4.700Q9 6 7.200 6.500V8M7.200 9v1" fill="none" stroke="#fff"/></svg></button>
</div>
<div class="tablewrap">
<table>
<colgroup><col class="k0"><col class="k1"><col class="k2"><col class="k3"><col class="k4"><col></colgroup>
<thead><tr class="band"><td colspan="2"></td><td></td><td></td><td></td><td></td></tr><tr><th colspan="2">Description</th><th>Symbol</th><th>Value</th><th>Unit</th><th>Comment</th></tr></thead>
<tbody>
<tr class="group focus"><td><i class="box"></i></td><td colspan="5">Sectional Area</td></tr>
<tr><td></td><td class="leaf">Sectional area</td><td>A</td><td class="n">32.96</td><td>cm<sup>2</sup></td><td></td></tr>
<tr><td></td><td class="leaf last">Geometric sectional area</td><td>A<sub>geom</sub></td><td class="n">32.96</td><td>cm<sup>2</sup></td><td></td></tr>
<tr class="gap"><td></td><td colspan="5"></td></tr>
<tr class="group"><td><i class="box"></i></td><td colspan="5">Bending</td></tr>
<tr class="alt"><td></td><td class="leaf">Location of centroidal axis in y-direction</td><td>e<sub>y</sub></td><td class="n">71.8</td><td>mm</td><td>relative to zero point</td></tr>
<tr class="alt"><td></td><td class="leaf">Location of centroidal axis in z-direction</td><td>e<sub>z</sub></td><td class="n">64.0</td><td>mm</td><td>relative to zero point</td></tr>
<tr><td></td><td class="leaf">Area moment of inertia about y-axis</td><td>I<sub>y</sub></td><td class="n">1749.72</td><td>cm<sup>4</sup></td><td></td></tr>
<tr><td></td><td class="leaf">Area moment of inertia about z-axis</td><td>I<sub>z</sub></td><td class="n">763.25</td><td>cm<sup>4</sup></td><td></td></tr>
</tbody>
</table>
<div class="scroll"><svg viewBox="0 0 10 10"><path d="M2.500 6.500L5 4l2.500 2.500" fill="none" stroke="#444" stroke-width="1.200"/></svg><i class="thumb"></i><svg viewBox="0 0 10 10"><path d="M2.500 3.500L5 6l2.500-2.500" fill="none" stroke="#444" stroke-width="1.200"/></svg></div>
</div>
<div class="pager"><button class="first" aria-label="First page"></button><button class="prev" aria-label="Previous page"></button><span>1 of 1</span><button class="next" aria-label="Next page"></button><button class="last" aria-label="Last page"></button><button class="tab">Section Properties</button></div>
</section>
</main>
</div>

<footer class="status"><div class="snaps"><button>SNAP</button><button>GRID</button><button>OSNAP</button></div><span class="cell s1"></span><span class="cell s2"></span><span class="cell s3">CS: Global YZ</span><span class="cell s4"></span><span class="cell s4"></span><span class="cell s5"></span></footer>
</div>
</body>
</html>
```

FILE: styles.css
```css
* { box-sizing: border-box; }
body { margin: 0; background: #f6f6f6; color: #000; font: 7px/10px "Open Sans", "Noto Sans", sans-serif; }
h1, h2, p, ol { margin: 0; padding: 0; font: inherit; list-style: none; }
button { border: 0; padding: 0; background: none; font: inherit; color: inherit; display: flex; align-items: center; justify-content: center; flex: none; }
select { appearance: none; border: 0; padding: 0; margin: 0; background: none; font: inherit; color: inherit; flex: 1; min-width: 0; opacity: 1; }
svg { display: block; flex: none; }
sub, sup { font-size: 6px; line-height: 0; }
sub { vertical-align: -1px; }
sup { vertical-align: 3px; }
.defs { position: absolute; width: 0; height: 0; }
.i12 { width: 11px; height: 11px; }
.gray { filter: grayscale(1); opacity: .6; }

.window { display: flex; flex-direction: column; height: 100vh; border: 1px solid #999; border-left-width: 2px; }
.titlebar { display: flex; align-items: center; height: 19px; flex: none; background: #fff; padding-left: 4px; gap: 3px; }
.titlebar h1 { flex: 1; }
.wincontrols { display: flex; }
.wincontrols button { width: 30px; }
.wincontrols svg { width: 8px; height: 8px; }
.menubar { display: flex; align-items: center; height: 14px; flex: none; }
.menubar button { margin-left: 11px; }
.flag { width: 9px; height: 8px; }
.menubar .flag + button { margin-left: 5px; }
.license { margin-left: auto; }
.menubar .mdi { margin-left: 4px; width: 8px; }
.menubar .license + .mdi { margin-left: 7px; }
.mdi svg { width: 6px; height: 6px; }
.menubar .mdi:last-child { margin-right: 2px; }

.toolbar { display: flex; align-items: center; height: 18px; flex: none; border-top: 1px solid #ececec; }
.toolbar .grip { width: 6px; height: 14px; flex: none; border-left: 1px solid #e0e0e0; background: repeating-linear-gradient(#bbb 0 1px, transparent 1px 2px) 2px 0 / 1px 12px no-repeat; }
.toolbar .grip.pushed { margin-left: auto; }
.ib { width: 17px; height: 15px; }
.ib svg { width: 13px; height: 13px; }
.ib.on { background: #cce4f9; border-right: 1px solid #a8cdf0; }
.dd { width: 8px; height: 15px; }
.dd::before { content: ""; border: 2px solid transparent; border-top: 3px solid #333; border-bottom: 0; }
.sep { width: 5px; height: 13px; flex: none; background: linear-gradient(#dadada, #dadada) 2px 0 / 1px 100% no-repeat; }
.more { width: 9px; font-size: 9px; color: #777; }
.combo { display: flex; align-items: center; height: 14px; background: #e6e6f2 url("data:image/svg+xml,%3Csvg xmlns='http://www.w3.org/2000/svg' width='6' height='6'%3E%3Cpath d='M.5 2L3 4.500 5.500 2' fill='none' stroke='%23777'/%3E%3C/svg%3E") right 3px center no-repeat; padding: 0 10px 0 3px; gap: 3px; min-width: 0; }
.combo.lc { width: 157px; }
.combo.lc b { background: #000; color: #fff; width: 19px; height: 9px; text-align: center; font-weight: 400; line-height: 9px; }
.combo.lc select { border-left: 1px solid #f4f4f8; padding-left: 3px; }
.combo.mem { width: 79px; }
.step { width: 10px; height: 14px; background: #d2d2d2; }
.step + .step { border-left: 1px solid #e6e6e6; }
.step::before { content: ""; border: 2px solid transparent; }
.step.prev::before { border-right: 3px solid #333; border-left: 0; }
.step.next::before { border-left: 3px solid #333; border-right: 0; }
.step.lit { background: #e9e9f4; }
.ptools .step:not(.lit)::before { opacity: .6; }

.body { display: flex; flex: 1; min-height: 0; }
.navigator { width: 175px; flex: none; display: flex; flex-direction: column; border-right: 1px solid #c8c8d2; }
.panelhead { display: flex; align-items: center; height: 14px; flex: none; background: #d8e5f3; padding: 0 4px 0 3px; gap: 8px; }
.panelhead h2 { flex: 1; font-weight: 600; }
.panelhead svg { width: 6px; height: 6px; }
.navcombo { display: flex; padding: 3px 1px 7px 2px; }
.navcombo .combo { flex: 1; }
.combo.off { background-color: #e3e3e3; color: #8a8a8a; }
.treewrap { display: flex; flex: 1; min-height: 0; background: #fff; }
.tree { flex: 1; display: grid; grid-auto-rows: 1fr; padding-bottom: 2px; }
.tree label { display: flex; align-items: center; padding-left: 40px; white-space: nowrap; min-height: 0; }
.tree label.branch { padding-left: 16px; }
.tree svg { width: 12px; height: 10px; margin: 0 3px; }
.tree .chev { width: 7px; height: 7px; margin: 0 4px 0 0; }
.tree label.branch svg:nth-of-type(2) { margin-right: 2px; }
input[type="radio"], input[type="checkbox"] { appearance: none; margin: 0; width: 9px; height: 9px; border: 1px solid #555; background: #fff; flex: none; }
input[type="radio"] { border-radius: 50%; }
input[type="radio"]:checked { background: radial-gradient(circle, #333 0 2px, #fff 3px); }
input[type="checkbox"] { background: #cfe6fa; border-color: #5a8fc0; }
.tree .sel { background: linear-gradient(#cde8ff, #cde8ff) 51px 0 no-repeat; }
.scroll { width: 10px; flex: none; background: #f0f0f0; display: flex; flex-direction: column; }
.scroll svg { width: 10px; height: 12px; }
.thumb { background: #cdcdcd; }
.navigator .thumb { margin-top: auto; height: 52%; margin-bottom: 79px; }
.display { height: 48px; flex: none; background: #fff; border-top: 2px solid #f0f0f0; }
.display label { display: flex; align-items: center; height: 16px; padding-left: 2px; gap: 3px; }
.display .chev { width: 8px; height: 8px; margin-right: 1px; }
.navtabs { display: flex; height: 17px; flex: none; }
.navtabs button { width: 25px; background: #ececec; border-right: 1px solid #ccc; border-top: 1px solid #d8d8d8; }
.navtabs button.active { background: #fff; border-top-color: #fff; }
.navtabs svg { width: 11px; height: 11px; }

.work { flex: 1; min-width: 0; display: flex; flex-direction: column; padding-left: 3px; }
.canvas { position: relative; flex: 1; min-height: 0; background: #fdfdfd; overflow: hidden; }
.drawing { position: absolute; inset: 0; width: 100%; height: 100%; }
.axis { font-size: 7px; }
.info { position: absolute; left: 3px; top: 3px; line-height: 11px; }
.info .sig { padding-left: 2px; }
.info .sig, .extremes { font-size: 8px; }
.canvas sub { vertical-align: -2px; }
.extremes { position: absolute; left: 3px; bottom: 4px; }

.control { position: absolute; right: 74px; top: 100px; width: 136px; background: #fff; border: 1px solid #ddd; box-shadow: 0 1px 5px #0006; }
.ctitle { display: flex; align-items: center; height: 20px; padding-left: 5px; color: #999; border-bottom: 1px solid #ddd; }
.ctitle h2 { flex: 1; }
.ctitle button { width: 13px; height: 12px; background: #e4e4e4; color: #ccc; }
.chead { padding: 3px 6px; height: 26px; line-height: 9px; }
.scale { display: flex; background: #f6f6f6; padding: 8px 30px 13px 0; height: 221px; }
.vals { flex: 1; text-align: right; padding-right: 8px; }
.vals li { height: 17px; line-height: 11px; }
.cols { width: 27px; display: flex; flex-direction: column; gap: 1px; padding-top: 5px; }
.cols i { height: 16px; border-top: 1px solid #ffffff80; border-bottom: 1px solid #ffffff40; }
.c1 { background: #b80000; } .c2 { background: #f00; } .c3 { background: #ffaa00; } .c4 { background: #d0d000; }
.c5 { background: #ff0; } .c6 { background: #0f0; } .c7 { background: #00e58a; } .c8 { background: #00f6f6; }
.c9 { background: #0096ff; } .c10 { background: #00f; } .c11 { background: #0000a8; }
.slider { display: grid; width: 14px; height: 195px; margin-left: 4px; background: linear-gradient(90deg, #d0d0d0 1px, #ececec 1px 2px, #d0d0d0 2px) center / 3px 100% no-repeat; }
.slider input { grid-area: 1 / 1; appearance: none; writing-mode: vertical-lr; direction: rtl; width: 14px; height: 195px; margin: 0; background: none; pointer-events: none; }
.slider input::-webkit-slider-thumb { appearance: none; width: 14px; height: 7px; background: #0078d7; pointer-events: auto; }
.cbtns { display: flex; justify-content: flex-end; gap: 4px; padding: 4px 4px 3px; }
.cbtns button { width: 17px; height: 14px; background: #cde3f6; }
.cbtns .on { border: 1px solid #3b78ad; }
.cbtns svg { width: 11px; height: 11px; }
.ctabs { display: flex; background: #f6f6f6; border-top: 1px solid #ccc; }
.ctabs button { width: 26px; height: 16px; background: #fff; border-right: 1px solid #ccc; }
.ctabs svg { width: 11px; height: 11px; }

.props { flex: none; display: flex; flex-direction: column; border-top: 1px solid #e8e8e8; }
.pmenu { display: flex; height: 15px; padding-left: 5px; gap: 11px; }
.ptools { display: flex; align-items: center; height: 16px; }
.combo.p1 { width: 132px; }
.combo.p2 { width: 178px; }
.sep.wide { width: 7px; }
.units { width: 15px; line-height: 7px; }
.units span { border-top: 4px solid #8c8; height: 12px; }
.units u { color: #26c; }
.tablewrap { display: flex; border-bottom: 1px solid #bbbbc4; margin-top: 1px; }
table { flex: 1; height: 114px; border-collapse: collapse; table-layout: fixed; width: 100%; background: #fff; }
.k0 { width: 13px; } .k1 { width: 183px; } .k2 { width: 40px; } .k3 { width: 59px; } .k4 { width: 39px; }
td, th { padding: 0 3px; font-weight: 400; line-height: 10px; white-space: nowrap; border-right: 1px solid #dcdcdc; }
td:last-child, th:last-child { border-right: 0; }
th { background: #efefef; height: 13px; border-right-color: #d4d4d4; }
.band td { background: #e0e0e0; height: 7px; }
tbody tr { height: 10px; }
tbody td:first-child { background: #e4e4e4; padding: 0 0 0 3px; border: 0; }
tbody .group td { background: #e6e6e6; }
.focus { outline: 1px dashed #222; outline-offset: -1px; }
tbody .focus td { background: #e0e0e0; }
.alt td { background: #f6f6f6; }
td.leaf { padding-left: 15px; background-image: linear-gradient(90deg, #ccc, #ccc), linear-gradient(#ccc, #ccc); background-position: 6px 50%, 6px 0; background-size: 6px 1px, 1px 100%; background-repeat: no-repeat; }
td.leaf.last { background-size: 6px 1px, 1px 50%; }
.n { text-align: right; }
.box { display: block; width: 6px; height: 6px; border: 1px solid #bbb; background: linear-gradient(#777, #777) center / 2px 1px no-repeat #fff; }
.props .scroll { width: 12px; }
.props .scroll svg { margin-left: 1px; }
.props .thumb { height: 12px; margin: 0 1px auto; }
.pager { display: flex; height: 13px; align-items: center; }
.pager span { padding: 0 9px; }
.pager button:not(.tab) { width: 11px; }
.pager .prev::before, .pager .next::before, .pager .first::before, .pager .last::before { content: ""; border: 2px solid transparent; height: 0; }
.pager .prev::before, .pager .first::before { border-right: 3px solid #888; border-left: 0; }
.pager .next::before, .pager .last::before { border-left: 3px solid #888; border-right: 0; }
.pager .first, .pager .last { background: linear-gradient(#888, #888) 2px center / 1px 5px no-repeat; }
.pager .last { background-position: 8px center; }
.pager .tab { background: #fff; height: 13px; padding: 0 5px; border: 1px solid #ddd; border-top: 0; }

.status { display: flex; height: 16px; flex: none; justify-content: flex-end; align-items: flex-end; padding-bottom: 1px; }
.snaps { display: flex; gap: 1px; }
.snaps button { height: 13px; padding: 0 2px; background: #ececec; border: 1px solid #d4d4d4; }
.cell { height: 13px; border-left: 1px solid #ddd; padding-left: 3px; line-height: 13px; }
.s1 { width: 58px; border: 0; }
.s2 { width: 70px; }
.s3 { width: 102px; }
.s4 { width: 50px; }
.s5 { width: 12px; background: radial-gradient(circle, #bbb 0 1px, transparent 1px) right bottom / 3px 3px; clip-path: polygon(100% 0, 100% 100%, 0 100%); }
```
